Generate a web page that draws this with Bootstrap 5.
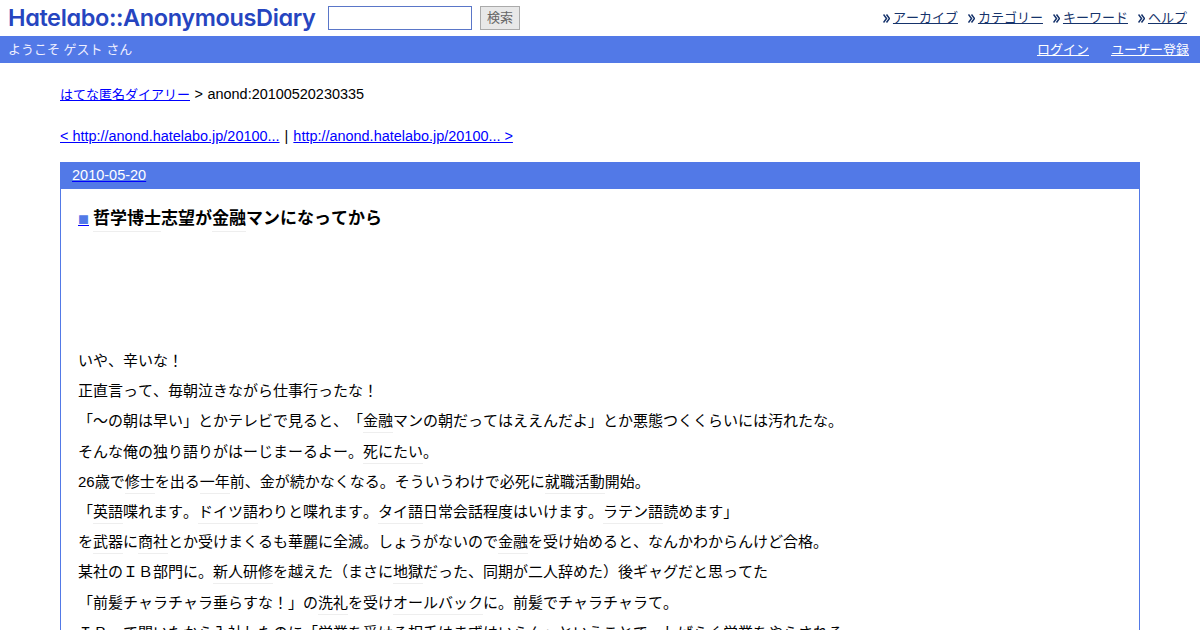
<!DOCTYPE html>
<html lang="ja">
<head>
<meta charset="utf-8">
<title>anond</title>
<link href="https://cdn.jsdelivr.net/npm/bootstrap@5.3.0/dist/css/bootstrap.min.css" rel="stylesheet">
<style>
html,body{height:630px;overflow:hidden}
body{font-family:"Liberation Sans","Noto Sans CJK JP",sans-serif;font-size:15px;color:#000;background:#fff;line-height:1.5;text-spacing-trim:space-all;font-kerning:none}
a{color:#00f}
.top-strip{height:36px;padding:0 13px 0 8px}
.logo-text{font-family:"Inter","Liberation Sans",sans-serif;font-feature-settings:"cv11";font-kerning:normal;font-weight:600;font-size:23.5px;letter-spacing:-.38px;color:#2645c0;line-height:36px;width:320px;white-space:nowrap}
.search-in{width:144px;height:24px;border:1px solid #5a76c8;padding:0 4px;background:#fff}
.search-go{width:40px;height:24px;margin-left:8px;border:1px solid #aaa;background:#e8e8e8;color:#666;font-size:13px;padding:0;line-height:22px}
.menu-item{font-size:13px;margin-left:10px}
.menu-item a{color:#16336b}
.menu-item svg{margin-right:3px;vertical-align:-1px}
.user-strip{height:27px;background:#5279e7;color:#eef;font-size:13px;padding:0 11px 0 8px;line-height:27px}
.user-strip a{color:#fff;margin-left:22px}
.crumb{margin:0 60px;padding-top:21px;font-size:14.45px;line-height:20px}
.crumb a{font-size:13px}
.crumb-sep{margin:0 .5px}
.pager{margin:21px 60px 16px;line-height:20px;font-size:14.45px}
.pager-sep{margin:0 1px}
.day-box{margin:0 60px;border:1px solid #5279e7;border-bottom:0}
.day-head{height:26px;background:#5279e7;padding:0 11px;line-height:25px;font-size:14.5px}
.day-head a{color:#fff;text-decoration-color:#00f}
.day-body{padding:18px 17px 0}
.entry-title{font-size:17px;font-weight:700;line-height:24px;margin:0 0 115px}
.entry-title a{color:#5279e7;font-family:"Noto Sans CJK JP",sans-serif;font-size:11px;text-decoration-color:#00f;margin-right:4px}
.entry-line{margin:0;height:30.2px;line-height:30.2px;white-space:nowrap}
.kw{border-bottom:1px solid #eee;padding-bottom:3px}
</style>
</head>
<body>
<div class="top-strip d-flex align-items-center">
  <div class="logo-text">Hatelabo::AnonymousDiary</div>
  <input class="search-in" type="text" aria-label="検索">
  <button class="search-go" type="button">検索</button>
  <div class="ms-auto d-flex">
    <span class="menu-item"><svg width="7" height="9" viewBox="0 0 7 9"><path d="M.5 .5l3 4-3 4M3.5 .5l3 4-3 4" fill="none" stroke="#16336b" stroke-width="1.5"/></svg><a href="#">アーカイブ</a></span>
    <span class="menu-item"><svg width="7" height="9" viewBox="0 0 7 9"><path d="M.5 .5l3 4-3 4M3.5 .5l3 4-3 4" fill="none" stroke="#16336b" stroke-width="1.5"/></svg><a href="#">カテゴリー</a></span>
    <span class="menu-item"><svg width="7" height="9" viewBox="0 0 7 9"><path d="M.5 .5l3 4-3 4M3.5 .5l3 4-3 4" fill="none" stroke="#16336b" stroke-width="1.5"/></svg><a href="#">キーワード</a></span>
    <span class="menu-item"><svg width="7" height="9" viewBox="0 0 7 9"><path d="M.5 .5l3 4-3 4M3.5 .5l3 4-3 4" fill="none" stroke="#16336b" stroke-width="1.5"/></svg><a href="#">ヘルプ</a></span>
  </div>
</div>
<div class="user-strip d-flex">
  <span>ようこそ ゲスト さん</span>
  <span class="ms-auto"><a href="#">ログイン</a><a href="#">ユーザー登録</a></span>
</div>
<div class="crumb"><a href="#">はてな匿名ダイアリー</a> <span class="crumb-sep">&gt;</span> anond:20100520230335</div>
<div class="pager"><a href="#">&lt; http://anond.hatelabo.jp/20100...</a> <span class="pager-sep">|</span> <a href="#">http://anond.hatelabo.jp/20100... &gt;</a></div>
<div class="day-box">
  <div class="day-head"><a href="#">2010-05-20</a></div>
  <div class="day-body">
    <h3 class="entry-title"><a href="#">■</a><span class="kw">哲学博士</span>志望が<span class="kw">金融</span>マンになってから</h3>
    <p class="entry-line">いや、辛いな！</p>
    <p class="entry-line">正直言って、毎朝泣きながら仕事行ったな！</p>
    <p class="entry-line">「～の朝は早い」とかテレビで見ると、「<span class="kw">金融</span>マンの朝だってはええんだよ」とか悪態つくくらいには汚れたな。</p>
    <p class="entry-line">そんな俺の独り語りがはーじまーるよー。<span class="kw">死にたい</span>。</p>
    <p class="entry-line">26歳で<span class="kw">修士</span>を出る<span class="kw">一年</span>前、金が続かなくなる。そういうわけで必死に<span class="kw">就職活動</span>開始。</p>
    <p class="entry-line">「<span class="kw">英語</span>喋れます。<span class="kw">ドイツ語</span>わりと喋れます。<span class="kw">タイ語</span>日常会話程度はいけます。<span class="kw">ラテン語</span>読めます」</p>
    <p class="entry-line">を<span class="kw">武器</span>に<span class="kw">商社</span>とか受けまくるも華麗に全滅。しょうがないので<span class="kw">金融</span>を受け始めると、なんかわからんけど合格。</p>
    <p class="entry-line">某社のＩＢ部門に。<span class="kw">新人研修</span>を越えた（まさに<span class="kw">地獄</span>だった、同期が二人辞めた）後ギャグだと思ってた</p>
    <p class="entry-line">「前髪チャラチャラ垂らすな！」の<span class="kw">洗礼</span>を受け<span class="kw">オールバック</span>に。前髪でチャラチャラて。</p>
    <p class="entry-line">ＩＢって聞いたから入社したのに「営業を受ける相手はまずはいらん」ということで、しばらく営業をやらされる</p>
  </div>
</div>
</body>
</html>
